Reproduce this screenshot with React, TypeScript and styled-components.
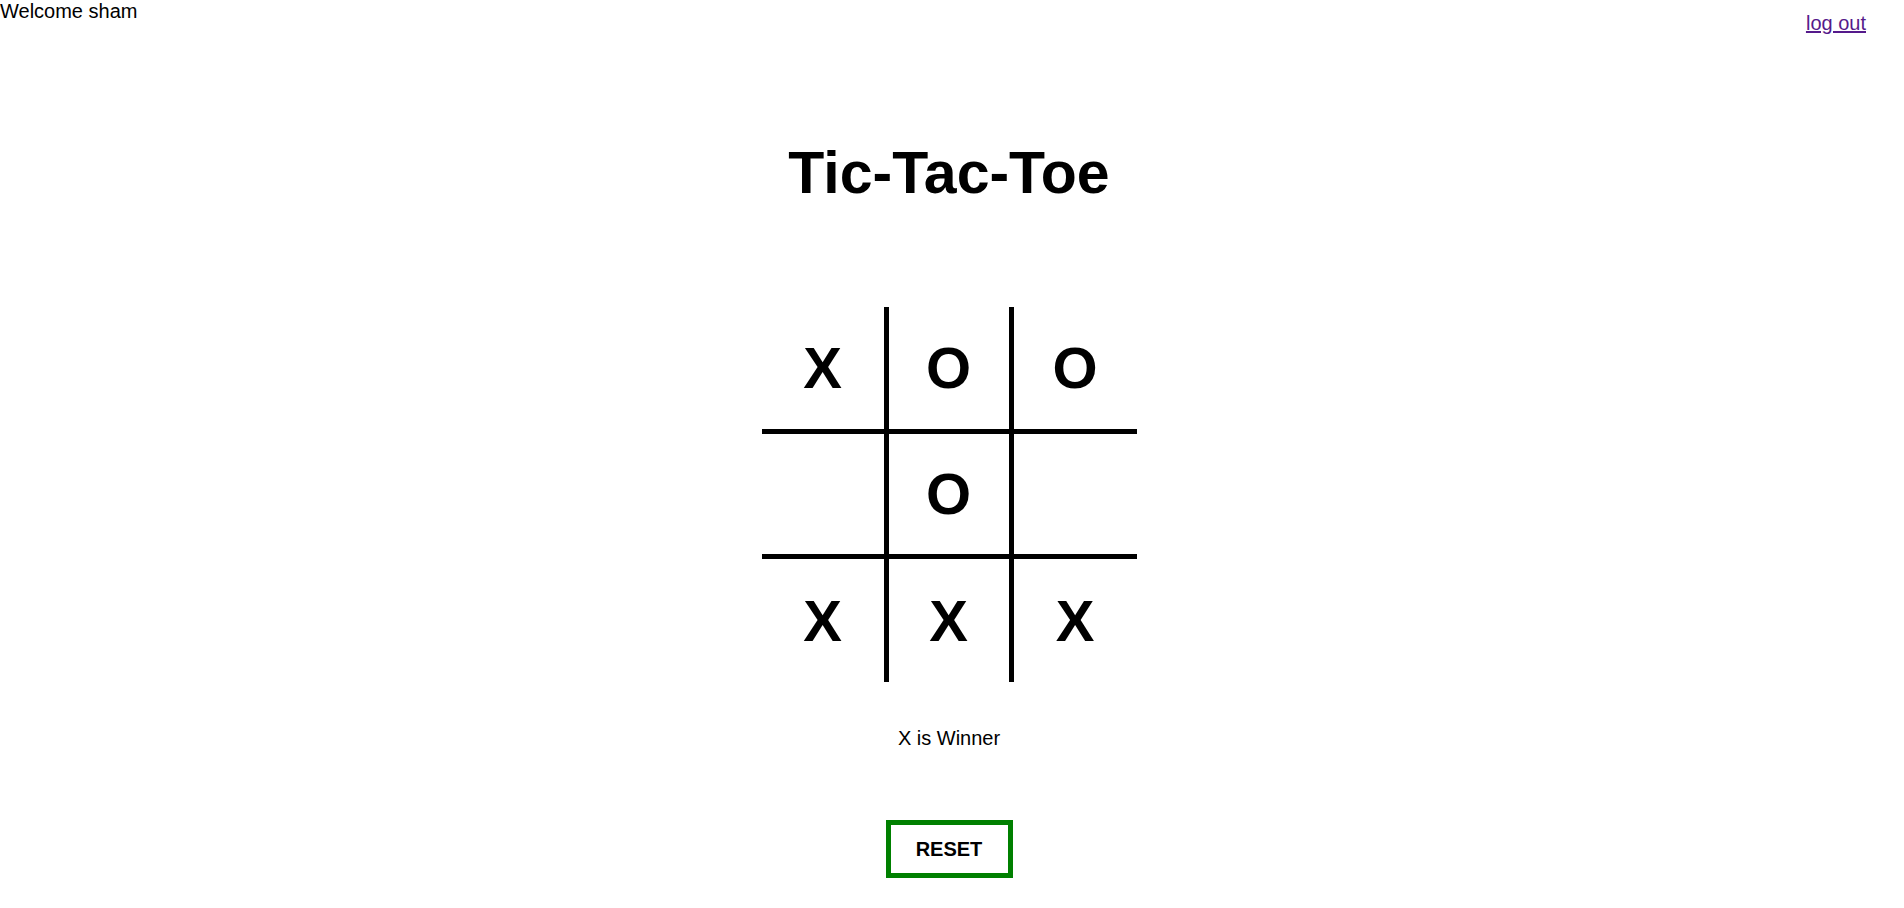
import React from "react";
import styled, { createGlobalStyle } from "styled-components";

const GlobalStyle = createGlobalStyle`
  html, body {
    margin: 0;
    padding: 0;
    background: #ffffff;
  }
  body {
    font-family: "Liberation Sans", Arial, sans-serif;
    color: #000000;
  }
`;

const Page = styled.div`
  width: calc(100% - 6px);
  display: flex;
  flex-direction: column;
  align-items: center;
`;

const Header = styled.header`
  align-self: stretch;
  display: flex;
  justify-content: space-between;
  align-items: flex-start;
  font-size: 20px;
  line-height: 23px;
`;

const Welcome = styled.span`
  display: block;
`;

const LogOut = styled.a`
  display: block;
  margin-top: 12px;
  margin-right: 32px;
  color: #551a8b;
  text-decoration: underline;
  cursor: pointer;
`;

const Title = styled.h1`
  margin: 105px 0 0 0;
  font-size: 59px;
  font-weight: bold;
  line-height: 67px;
`;

const Board = styled.div`
  margin-top: 100px;
  display: grid;
  grid-template-columns: 122px 130px 123px;
  grid-template-rows: 122px 130px 123px;
`;

const Cell = styled.div<{ $col: number; $row: number }>`
  box-sizing: border-box;
  display: flex;
  align-items: center;
  justify-content: center;
  font-size: 58px;
  font-weight: bold;
  line-height: 1;
  border-style: solid;
  border-color: #000000;
  border-width: ${(p) => (p.$row === 1 ? "5px" : "0")}
    ${(p) => (p.$col === 1 ? "5px" : "0")}
    ${(p) => (p.$row === 1 ? "5px" : "0")}
    ${(p) => (p.$col === 1 ? "5px" : "0")};
`;

const Status = styled.div`
  margin-top: 45px;
  font-size: 20px;
  line-height: 23px;
`;

const ResetButton = styled.button`
  margin-top: 70px;
  box-sizing: border-box;
  width: 127px;
  height: 58px;
  border: 5px solid #008000;
  background: #ffffff;
  font-family: "Liberation Sans", Arial, sans-serif;
  font-size: 20px;
  font-weight: bold;
  color: #000000;
  padding: 0;
  cursor: pointer;
`;

const board = ["X", "O", "O", "", "O", "", "X", "X", "X"];

export default function App() {
  return (
    <>
      <GlobalStyle />
      <Page>
        <Header>
          <Welcome>Welcome sham</Welcome>
          <LogOut href="#">log out</LogOut>
        </Header>
        <Title>Tic-Tac-Toe</Title>
        <Board>
          {board.map((v, i) => (
            <Cell key={i} $row={Math.floor(i / 3)} $col={i % 3}>
              {v}
            </Cell>
          ))}
        </Board>
        <Status>X is Winner</Status>
        <ResetButton>RESET</ResetButton>
      </Page>
    </>
  );
}
